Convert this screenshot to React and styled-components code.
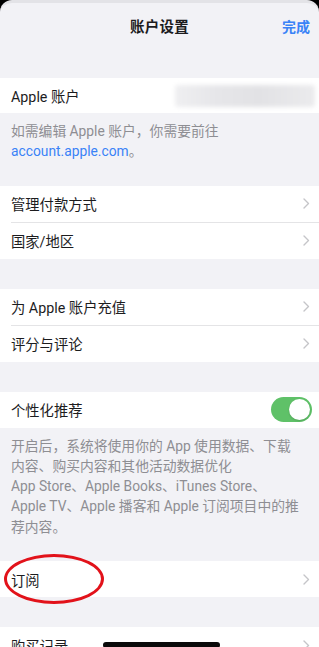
import React from "react"
import styled, { createGlobalStyle } from "styled-components"

const GlobalStyle = createGlobalStyle`
  html, body {
    margin: 0;
    padding: 0;
    height: 647px;
    overflow: hidden;
    background: #000;
  }
  * { box-sizing: border-box; }
`

const Sheet = styled.div`
  position: relative;
  height: 647px;
  overflow: hidden;
  background: #f2f2f6;
  border-top: 3px solid #e3e3e7;
  border-radius: 12px 12px 0 0;
  font-family: "Roboto", "Noto Sans CJK SC", sans-serif;
  color: #1c1c1e;
`

const NavBar = styled.div`
  height: 45px;
  display: flex;
  align-items: center;
  justify-content: center;
  position: relative;
`

const NavTitle = styled.div`
  font-size: 14.5px;
  font-weight: 600;
  letter-spacing: 0.2px;
`

const DoneButton = styled.div`
  position: absolute;
  right: 9px;
  top: 50%;
  transform: translateY(-50%);
  font-size: 14px;
  font-weight: 600;
  color: #3a82f7;
`

const Group = styled.div`
  background: #fff;
  margin-top: ${props => props.gap ?? 30}px;
  position: relative;
`

const Row = styled.div`
  position: relative;
  height: ${props => props.h || 36}px;
  display: flex;
  align-items: center;
  justify-content: space-between;
  padding: 0 9px 0 11px;
  font-size: 14.3px;
`

const Separator = styled.div`
  height: 1px;
  margin-left: 11px;
  background: #e4e4e6;
`

const Footer = styled.div`
  padding: 8px 6px 24px 11px;
  font-size: 13.8px;
  line-height: 20.3px;
  color: #8e8e93;
  white-space: nowrap;
`

const Link = styled.span`
  color: #3a82f7;
`

const Blurred = styled.div`
  width: 140px;
  height: 22px;
  margin-right: -5px;
  background: linear-gradient(90deg, #efeff1 0%, #e6e6e9 30%, #e2e2e5 60%, #ebebed 100%);
  filter: blur(2px);
  border-radius: 3px;
`

const Toggle = styled.div`
  width: 41px;
  height: 25px;
  border-radius: 13px;
  background: #5fc168;
  position: relative;
  margin-right: -2px;
`

const Knob = styled.div`
  position: absolute;
  right: 2px;
  top: 2px;
  width: 21px;
  height: 21px;
  border-radius: 50%;
  background: #fff;
  box-shadow: 0 1px 2px rgba(0, 0, 0, 0.15);
`

// red hand-drawn style annotation around the subscription row
const Marker = styled.div`
  position: absolute;
  left: 4px;
  top: -7px;
  width: 100px;
  height: 50px;
  border: 3.2px solid #e2121a;
  border-radius: 50%;
`

const HomeIndicator = styled.div`
  position: absolute;
  left: 103px;
  bottom: -1px;
  width: 117px;
  height: 6px;
  border-radius: 3px;
  background: #0a0a0a;
`

const Chevron = () => (
  <svg width="7" height="11" viewBox="0 0 7 11">
    <polyline points="1,1 5.5,5.5 1,10" fill="none" stroke="#c5c5c9" strokeWidth="1.4" strokeLinecap="round" strokeLinejoin="round" />
  </svg>
)

const LinkRow = ({ label, h }) => (
  <Row h={h}>
    <span>{label}</span>
    <Chevron />
  </Row>
)

export default function App() {
  return (
    <>
      <GlobalStyle />
      <Sheet>
        <NavBar>
          <NavTitle>账户设置</NavTitle>
          <DoneButton>完成</DoneButton>
        </NavBar>

        <Group gap={30}>
          <Row h={35}>
            <span>Apple 账户</span>
            <Blurred />
          </Row>
        </Group>
        <Footer>
          如需编辑 Apple 账户，你需要前往
          <br />
          <Link>account.apple.com</Link>。
        </Footer>

        <Group gap={0}>
          <LinkRow label="管理付款方式" />
          <Separator />
          <LinkRow label="国家/地区" />
        </Group>

        <Group>
          <LinkRow label="为 Apple 账户充值" />
          <Separator />
          <LinkRow label="评分与评论" />
        </Group>

        <Group>
          <Row>
            <span>个性化推荐</span>
            <Toggle>
              <Knob />
            </Toggle>
          </Row>
        </Group>
        <Footer>
          开启后，系统将使用你的 App 使用数据、下载
          <br />
          内容、购买内容和其他活动数据优化
          <br />
          App Store、Apple Books、iTunes Store、
          <br />
          Apple TV、Apple 播客和 Apple 订阅项目中的推
          <br />
          荐内容。
        </Footer>

        <Group gap={0}>
          <LinkRow label="订阅" />
          <Marker />
        </Group>

        <Group>
          <LinkRow label="购买记录" />
        </Group>

        <HomeIndicator />
      </Sheet>
    </>
  )
}
